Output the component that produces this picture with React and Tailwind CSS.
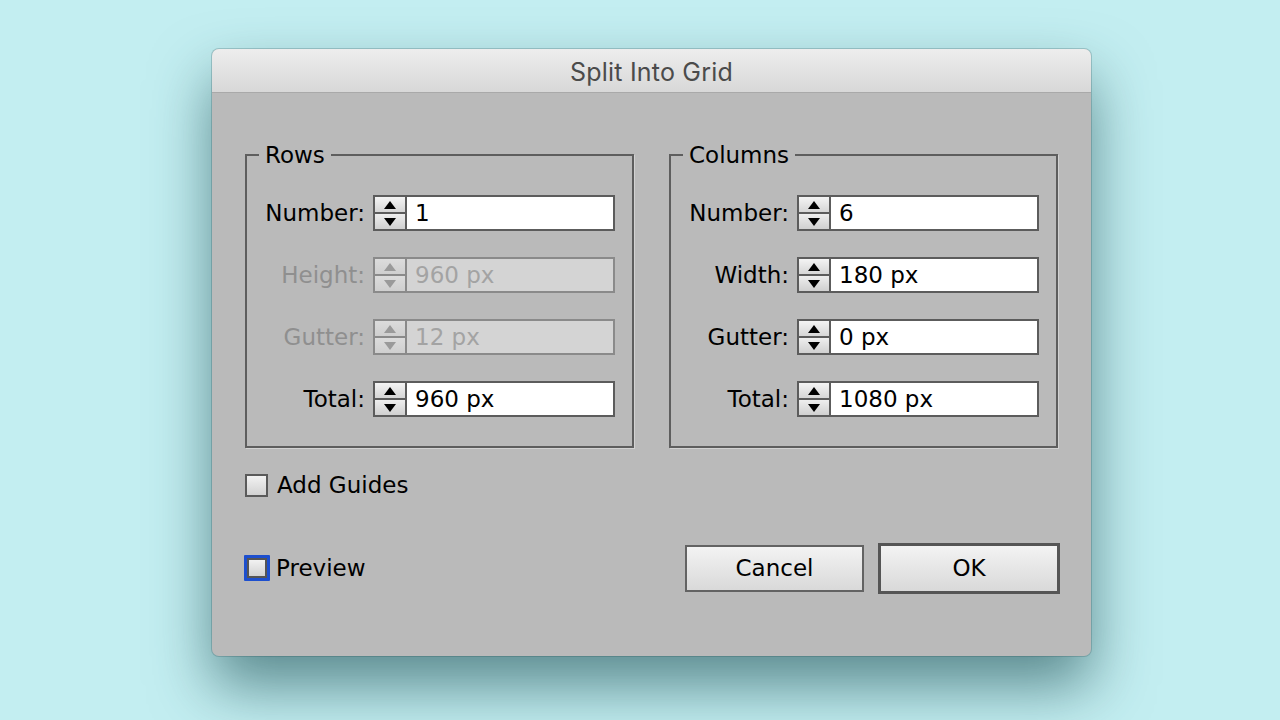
import React from 'react';

const font = { fontFamily: '"DejaVu Sans", Verdana, sans-serif' };

function Spinner({ disabled }) {
  const c = disabled ? 'border-b-[#9a9a9a]' : 'border-b-black';
  const d = disabled ? 'border-t-[#9a9a9a]' : 'border-t-black';
  return (
    <div className={`flex flex-col w-[32px] shrink-0 border-r-2 ${disabled ? 'border-[#8a8a8a]' : 'border-[#5c5c5c]'}`}>
      <div className={`flex-1 flex items-center justify-center bg-gradient-to-b ${disabled ? 'from-[#dcdcdc] to-[#cfcfcf]' : 'from-[#f4f4f4] to-[#d6d6d6]'} border-b-2 ${disabled ? 'border-[#8a8a8a]' : 'border-[#5c5c5c]'}`}>
        <div className={`w-0 h-0 border-l-[6px] border-r-[6px] border-b-[8px] border-l-transparent border-r-transparent ${c}`} />
      </div>
      <div className={`flex-1 flex items-center justify-center bg-gradient-to-b ${disabled ? 'from-[#dcdcdc] to-[#cfcfcf]' : 'from-[#eeeeee] to-[#d0d0d0]'}`}>
        <div className={`w-0 h-0 border-l-[6px] border-r-[6px] border-t-[8px] border-l-transparent border-r-transparent ${d}`} />
      </div>
    </div>
  );
}

function Field({ label, value, disabled }) {
  return (
    <div className="flex items-center h-[36px]">
      <div className={`w-[126px] pr-[8px] text-right ${disabled ? 'text-[#8f8f8f]' : 'text-black'}`}>{label}</div>
      <div className={`flex h-[36px] w-[242px] border-2 ${disabled ? 'border-[#8a8a8a] bg-[#d4d4d4]' : 'border-[#5c5c5c] bg-white'}`}>
        <Spinner disabled={disabled} />
        <div className={`flex items-center pl-[8px] ${disabled ? 'text-[#a3a3a3]' : 'text-black'}`}>{value}</div>
      </div>
    </div>
  );
}

function Group({ title, fields }) {
  return (
    <fieldset className="w-[389px] h-[307px] border-2 border-[#5e5e5e] px-0 pt-[26px] shadow-[1px_1px_0_#d2d2d2] m-0">
      <legend className="ml-[12px] px-[6px] leading-[28px] text-black">{title}</legend>
      <div className="flex flex-col gap-[26px]">
        {fields.map((f) => (
          <Field key={f.label} {...f} />
        ))}
      </div>
    </fieldset>
  );
}

function Checkbox({ label, focus }) {
  return (
    <div className={`flex items-center ${focus ? 'gap-[6px]' : 'gap-[9px]'}`}>
      <div className={focus ? 'border-[3px] border-[#1d4fce] rounded-[1px]' : 'p-0'}>
        <div className={`border-2 ${focus ? 'border-[#555] w-[20px] h-[20px]' : 'border-[#5a5a5a] w-[23px] h-[23px]'} bg-gradient-to-b from-[#f2f2f2] to-[#d2d2d2]`} />
      </div>
      <span className="text-black">{label}</span>
    </div>
  );
}

export default function App() {
  const rows = [
    { label: 'Number:', value: '1' },
    { label: 'Height:', value: '960 px', disabled: true },
    { label: 'Gutter:', value: '12 px', disabled: true },
    { label: 'Total:', value: '960 px' },
  ];
  const cols = [
    { label: 'Number:', value: '6' },
    { label: 'Width:', value: '180 px' },
    { label: 'Gutter:', value: '0 px' },
    { label: 'Total:', value: '1080 px' },
  ];

  return (
    <div className="w-[1280px] h-[720px] bg-[#c3eef1] flex pl-[212px] pt-[49px] overflow-hidden" style={font}>
      <div className="w-[879px] h-[607px] rounded-[7px] overflow-hidden bg-[#bababa] shadow-[0_30px_60px_rgba(20,70,75,0.6),0_0_0_1px_rgba(90,130,135,0.35)] flex flex-col text-[23px]">
        {/* title bar */}
        <div className="h-[44px] shrink-0 bg-gradient-to-b from-[#ededed] to-[#d8d8d8] border-b border-[#a9a9a9] flex items-center justify-center pt-[5px]">
          <span className="text-[25px] text-[#4b4b4b] tracking-[0.2px]" style={{ fontFamily: 'Inter, "Liberation Sans", sans-serif' }}>Split Into Grid</span>
        </div>

        {/* body */}
        <div className="flex flex-col pl-[33px] pr-[31px] pt-[48px]">
          <div className="flex gap-[35px]">
            <Group title="Rows" fields={rows} />
            <Group title="Columns" fields={cols} />
          </div>

          <div className="mt-[20px]">
            <Checkbox label="Add Guides" />
          </div>

          <div className="flex items-center justify-between mt-[40px]">
            <div className="-ml-[1px]">
              <Checkbox label="Preview" focus />
            </div>
            <div className="flex items-center gap-[14px]">
              <button className="w-[179px] h-[47px] border-2 border-[#636363] bg-gradient-to-b from-[#f3f3f3] to-[#d9d9d9] text-black">Cancel</button>
              <button className="w-[182px] h-[51px] border-[3px] border-[#555555] bg-gradient-to-b from-[#f3f3f3] to-[#d9d9d9] text-black">OK</button>
            </div>
          </div>
        </div>
      </div>
    </div>
  );
}
